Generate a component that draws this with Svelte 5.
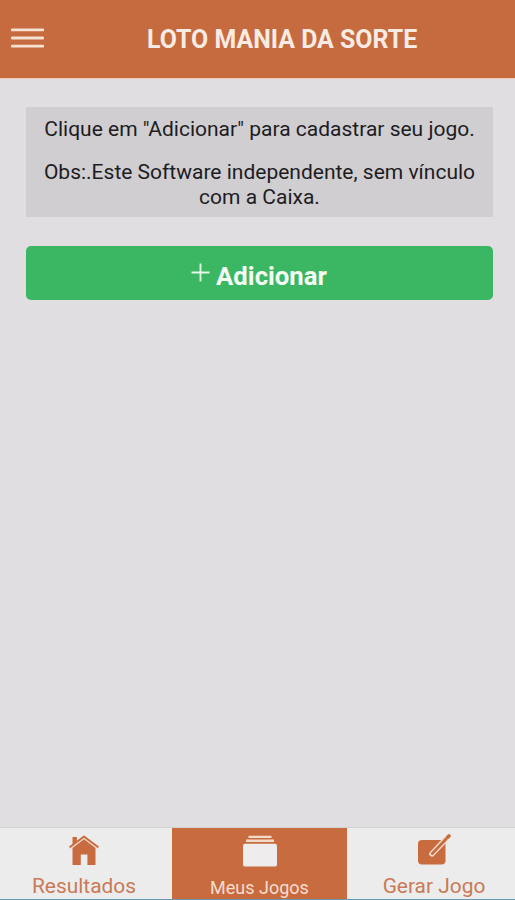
<script>
  const tabs = [
    { id: 'home', label: 'Resultados' },
    { id: 'games', label: 'Meus Jogos', active: true },
    { id: 'create', label: 'Gerar Jogo' }
  ];
</script>

<div class="app">
  <header>
    <button class="menu" aria-label="Menu">
      <svg width="33" height="21" viewBox="0 0 33 21">
        <path d="M1.2 1.8h30.6M1.2 10h30.6M1.2 18.2h30.6" stroke="#f6e2d4" stroke-width="2.8" stroke-linecap="round" />
      </svg>
    </button>
    <h1>LOTO MANIA DA SORTE</h1>
  </header>

  <main>
    <section class="notice">
      <p class="first">Clique em "Adicionar" para cadastrar seu jogo.</p>
      <p class="second">Obs:.Este Software independente, sem vínculo<br />com a Caixa.</p>
    </section>
    <button class="add">
      <svg width="19" height="19" viewBox="0 0 19 19">
        <path d="M9.5 0.5v18M0.5 9.5h18" stroke="#e4f7e6" stroke-width="1.9" />
      </svg>
      <span>Adicionar</span>
    </button>
  </main>

  <nav>
    {#each tabs as tab}
      <button class="tab {tab.id}" class:active={tab.active}>
        <svg width="36" height="34" viewBox="0 0 36 34">
          {#if tab.id === 'home'}
            <path d="M6.5 14L18 5l11.5 9V31H21.4V20.5h-6.6V31H6.5z" fill="#c86c3f" />
            <path d="M6.5 3h4.4v6L6.5 12z" fill="#c86c3f" />
            <path d="M4 14.2L18 3.9l14 10.3" fill="none" stroke="#ebcfc0" stroke-width="2.2" />
            <path d="M3.6 13.2L18 2.4l14.4 10.8" fill="none" stroke="#c86c3f" stroke-width="1.9" stroke-linejoin="round" />
          {:else if tab.id === 'games'}
            <path d="M6.5 2.9h23M4 6.7h28" stroke="#f3d9ca" stroke-width="2.4" />
            <rect x="1" y="9.8" width="34" height="22.7" rx="2" fill="#eeecec" />
          {:else}
            <rect x="2" y="6" width="27.5" height="24.5" rx="4" fill="#c86c3f" />
            <path d="M16 19.8L29.5 5.5" stroke="#efd9cc" stroke-width="5.6" stroke-linecap="round" />
            <path d="M16.2 19.6L29.8 5.2" stroke="#c86c3f" stroke-width="2.8" stroke-linecap="round" />
            <path d="M31.6 3.3L33 1.9" stroke="#c86c3f" stroke-width="3.6" stroke-linecap="round" />
          {/if}
        </svg>
        <span>{tab.label}</span>
      </button>
    {/each}
  </nav>
</div>

<style>
  :global(body) { margin: 0; }
  .app {
    display: flex;
    flex-direction: column;
    height: 900px;
    background: #e0dee1;
    font-family: Roboto, 'Liberation Sans', sans-serif;
    color: #1d1c1f;
    overflow: hidden;
  }
  button { border: 0; padding: 0; background: none; font: inherit; }
  header {
    box-sizing: border-box;
    display: flex;
    height: 79px;
    flex: none;
    background: #c66b3f;
    border-bottom: 1px solid #efcab5;
    padding-left: 11px;
  }
  .menu { width: 33px; height: 21px; margin-top: 28px; }
  .menu svg, .add svg, .tab svg { display: block; flex: none; }
  h1 {
    margin: 25px 0 0 103px;
    font-size: 24.9px;
    line-height: 30px;
    font-weight: 700;
    color: #f8ebe3;
    white-space: nowrap;
  }
  main { flex: 1; padding: 28px 22px 0 26px; }
  .notice {
    box-sizing: border-box;
    height: 110px;
    padding-top: 10px;
    background: #d0ced1;
    text-align: center;
    font-size: 21px;
    line-height: 25px;
  }
  p { margin: 0; white-space: nowrap; }
  .second { margin-top: 18px; }
  .add {
    display: flex;
    justify-content: center;
    width: 100%;
    height: 54px;
    margin-top: 29px;
    border-radius: 5px;
    background: #3bb764;
    color: #f4fcf3;
    font-size: 25.7px;
    font-weight: 700;
    line-height: 30px;
  }
  .add svg { margin: 17px 6px 0 -1px; }
  .add span { margin-top: 15px; }
  nav {
    box-sizing: border-box;
    display: flex;
    flex: none;
    height: 73px;
    border-top: 1px solid #d2d0d1;
    border-bottom: 1px solid #6a9aac;
    background: #ececec;
  }
  .tab {
    display: flex;
    flex-direction: column;
    align-items: center;
    width: 168px;
    color: #c97a57;
    font-size: 20.9px;
    line-height: 24px;
  }
  .tab svg { margin-top: 6px; }
  .tab span { margin-top: 6px; white-space: nowrap; }
  .home { width: 168px; margin-right: 4px; }
  .active { width: 175px; background: #c86c3f; color: #f5ddd0; font-size: 18px; }
  .active span { margin-top: 8px; }
  .create { width: 168px; padding-left: 6px; }
</style>
